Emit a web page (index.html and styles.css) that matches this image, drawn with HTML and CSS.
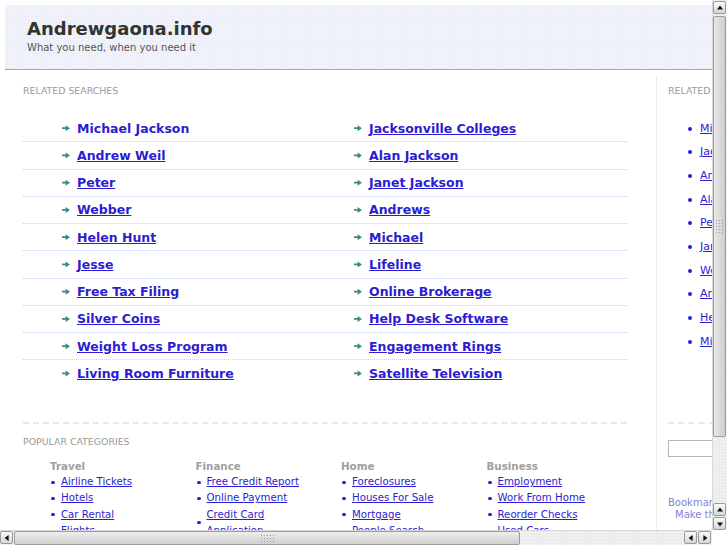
FILE: index.html
```html
<!doctype html>
<html lang="en">
<head>
    <meta charset="UTF-8">
    <title>Andrewgaona.info</title>
	<link rel="stylesheet" href="styles.css">
</head>
<body>
	<div id="page">
		<div class="header">
			<h1>Andrewgaona.info</h1>
			<p>What you need, when you need it</p>
		</div>
		<div class="main">
			<div class="content">
				<h2>Related Searches</h2>
				<div class="results">
					<div class="row"><a class="item hover" href="#">Michael Jackson</a><a class="item" href="#">Jacksonville Colleges</a></div>
					<div class="row"><a class="item" href="#">Andrew Weil</a><a class="item" href="#">Alan Jackson</a></div>
					<div class="row"><a class="item" href="#">Peter</a><a class="item" href="#">Janet Jackson</a></div>
					<div class="row"><a class="item" href="#">Webber</a><a class="item" href="#">Andrews</a></div>
					<div class="row"><a class="item" href="#">Helen Hunt</a><a class="item" href="#">Michael</a></div>
					<div class="row"><a class="item" href="#">Jesse</a><a class="item" href="#">Lifeline</a></div>
					<div class="row"><a class="item" href="#">Free Tax Filing</a><a class="item" href="#">Online Brokerage</a></div>
					<div class="row"><a class="item" href="#">Silver Coins</a><a class="item" href="#">Help Desk Software</a></div>
					<div class="row"><a class="item" href="#">Weight Loss Program</a><a class="item" href="#">Engagement Rings</a></div>
					<div class="row"><a class="item" href="#">Living Room Furniture</a><a class="item" href="#">Satellite Television</a></div>
				</div>
				<div class="sep"></div>
				<h2>Popular Categories</h2>
				<div class="cats">
					<div class="cat">
						<h3>Travel</h3>
						<ul>
							<li><a href="#">Airline Tickets</a></li>
							<li><a href="#">Hotels</a></li>
							<li><a href="#">Car Rental</a></li>
							<li><a href="#">Flights</a></li>
						</ul>
					</div>
					<div class="cat">
						<h3>Finance</h3>
						<ul>
							<li><a href="#">Free Credit Report</a></li>
							<li><a href="#">Online Payment</a></li>
							<li><a href="#">Credit Card Application</a></li>
							<li><a href="#">Insurance</a></li>
						</ul>
					</div>
					<div class="cat">
						<h3>Home</h3>
						<ul>
							<li><a href="#">Foreclosures</a></li>
							<li><a href="#">Houses For Sale</a></li>
							<li><a href="#">Mortgage</a></li>
							<li><a href="#">People Search</a></li>
						</ul>
					</div>
					<div class="cat">
						<h3>Business</h3>
						<ul>
							<li><a href="#">Employment</a></li>
							<li><a href="#">Work From Home</a></li>
							<li><a href="#">Reorder Checks</a></li>
							<li><a href="#">Used Cars</a></li>
						</ul>
					</div>
				</div>
			</div>
			<div class="side">
				<h2>Related Searches</h2>
				<ul>
					<li><a href="#">Michael Jackson</a></li>
					<li><a href="#">Jacksonville Colleges</a></li>
					<li><a href="#">Andrew Weil</a></li>
					<li><a href="#">Alan Jackson</a></li>
					<li><a href="#">Peter</a></li>
					<li><a href="#">Janet Jackson</a></li>
					<li><a href="#">Webber</a></li>
					<li><a href="#">Andrews</a></li>
					<li><a href="#">Helen Hunt</a></li>
					<li><a href="#">Michael</a></li>
				</ul>
				<div class="sep"></div>
				<input type="text" class="search">
				<div class="bookmark">
					<a href="#">Bookmark this page</a>
					<a href="#" class="home">Make this your homepage</a>
				</div>
			</div>
		</div>
	</div>

	<!-- scrollbars as they appear in the shot -->
	<div class="vbar">
		<span class="btn up"></span>
		<span class="vthumb"><i class="grip"></i></span>
		<span class="fill"></span>
		<span class="btn up"></span>
		<span class="btn down"></span>
	</div>
	<div class="hbar">
		<span class="btn left"></span>
		<span class="hthumb"><i class="grip"></i></span>
		<span class="fill"></span>
		<span class="btn left"></span>
		<span class="btn right"></span>
	</div>
	<div class="corner"></div>
</body>
</html>
```

FILE: styles.css
```css
*{
	margin:0;
	padding:0;
}
html,body{
	overflow:hidden;
	background:#fff;
}
body{
	font-family:"DejaVu Sans",Verdana,sans-serif;
	color:#333;
}
ul{
	list-style:none;
}
a{
	color:#2c1dd2;
}
#page{
	width:1000px;
	padding:5px 0 0 5px;
}
.header{
	height:65px;
	padding-left:22px;
	border-bottom:1px solid #94a8d8;
	background-color:#edf0f8;
	background-image:radial-gradient(#f9fafd 0.5px, transparent 0.7px);
	background-size:3px 3px;
	box-sizing:border-box;
}
.header h1{
	padding-top:13px;
	font-size:18px;
	line-height:22px;
	color:#333;
}
.header p{
	margin-top:2px;
	font-size:10px;
	line-height:12px;
	color:#555;
}
.main{
	display:flex;
	margin-top:7px;
}
.content{
	width:633px;
	padding-left:18px;
	border-right:1px dotted #cdd9ef;
	padding-bottom:40px;
}
h2{
	padding-top:8px;
	font-size:9.4px;
	line-height:12px;
	font-weight:normal;
	text-transform:uppercase;
	color:#999;
}
.results{
	width:604px;
	margin-top:18px;
}
.row{
	display:grid;
	grid-template-columns:292px 1fr;
	align-items:center;
	height:26.25px;
	padding-left:39px;
	border-bottom:1px dotted #c5d1ea;
}
.row:last-child{
	border-bottom:none;
}
.item{
	display:flex;
	align-items:center;
	gap:7px;
	justify-self:start;
	font-size:12.5px;
	font-weight:bold;
}
.item::before{/*little teal arrow*/
	content:"";
	width:8px;
	height:6px;
	background:#3a8c80;
	clip-path:polygon(0 34%,45% 34%,45% 0,100% 50%,45% 100%,45% 66%,0 66%);
}
.item.hover{
	text-decoration:none;
}
.sep{
	margin-top:35px;
	border-top:2px dashed #e1e8f6;
	width:604px;
}
.content .sep + h2{
	padding-top:12.5px;
}
.cats{
	display:grid;
	grid-template-columns:repeat(4,145.5px);
	padding:11px 0 0 27px;
}
.cat h3{
	font-size:10.3px;
	line-height:14px;
	color:#a0a0a0;
}
.cat ul{
	width:121px;
	margin-top:1px;
}
.cat li,
.side li{
	display:flex;
	align-items:center;
	min-height:16.33px;
	font-size:10.2px;
	line-height:16.33px;
}
.cat li::before,
.side li::before{
	content:"";
	flex:none;
	width:4px;
	height:3px;
	margin:0 6px 0 1px;
	border-radius:2px;
	background:#2c1dd2;
}
.side{
	padding-left:11px;
	width:200px;
}
.side ul{
	margin-top:20px;
	padding-left:19px;
}
.side li{
	height:23.67px;
	font-size:11px;
}
.side li::before{
	height:4px;
	margin-right:8px;
}
.side .sep{
	margin-top:68px;
	width:200px;
}
.search{
	display:block;
	width:150px;
	height:17px;
	margin-top:16px;
	border:1px solid #b5b5b5;
	box-sizing:border-box;
}
.bookmark{
	margin-top:40px;
	font-size:10px;
	line-height:12px;
}
.bookmark a{
	display:block;
	color:#8282d6;
	text-decoration:none;
}
.bookmark .home{
	padding-left:7px;
}
/*scroll bars*/
.vbar,.hbar{
	position:fixed;
	display:flex;
	background-color:#ececec;
	background-image:radial-gradient(#fafafa 0.6px, transparent 0.8px);
	background-size:3px 3px;
}
.vbar{
	top:0;
	right:0;
	width:14px;
	height:530px;
	flex-direction:column;
	border-left:1px solid #d8d8d8;
}
.hbar{
	left:0;
	bottom:0;
	width:712px;
	height:15px;
	border-top:1px solid #d8d8d8;
	box-sizing:border-box;
}
.corner{
	position:fixed;
	right:0;
	bottom:0;
	width:14px;
	height:15px;
	background:#fff;
}
.fill{
	flex:1;
}
.btn{
	position:relative;
	flex:none;
	width:13px;
	height:13px;
	margin:1px 0 0;
	border:1px solid #9a9a9a;
	border-radius:2px;
	background:linear-gradient(#fafafa,#d6d6d6);
	box-sizing:border-box;
}
.hbar .btn{
	margin:0 1px 0 0;
}
.btn::before{
	content:"";
	position:absolute;
	left:50%;
	top:50%;
	border:3px solid transparent;
}
.btn.up::before{
	border-bottom:4px solid #111;
	border-top:0;
	transform:translate(-50%,-60%);
}
.btn.down::before{
	border-top:4px solid #111;
	border-bottom:0;
	transform:translate(-50%,-40%);
}
.btn.left::before{
	border-right:4px solid #111;
	border-left:0;
	transform:translate(-60%,-50%);
}
.btn.right::before{
	border-left:4px solid #111;
	border-right:0;
	transform:translate(-40%,-50%);
}
.vthumb,.hthumb{
	display:flex;
	align-items:center;
	justify-content:center;
	border:1px solid #9c9c9c;
	border-radius:2px;
	box-sizing:border-box;
}
.vthumb{
	width:13px;
	height:421px;
	margin-top:2px;
	background:linear-gradient(90deg,#e8e8e8,#cdcdcd);
}
.hthumb{
	width:506px;
	height:14px;
	background:linear-gradient(#eeeeee,#cfcfcf);
}
.grip{
	display:block;
	background-image:radial-gradient(#9a9a9a 0.7px, transparent 0.9px);
	background-size:3px 3px;
}
.vthumb .grip{
	width:9px;
	height:15px;
}
.hthumb .grip{
	width:15px;
	height:9px;
}
```
